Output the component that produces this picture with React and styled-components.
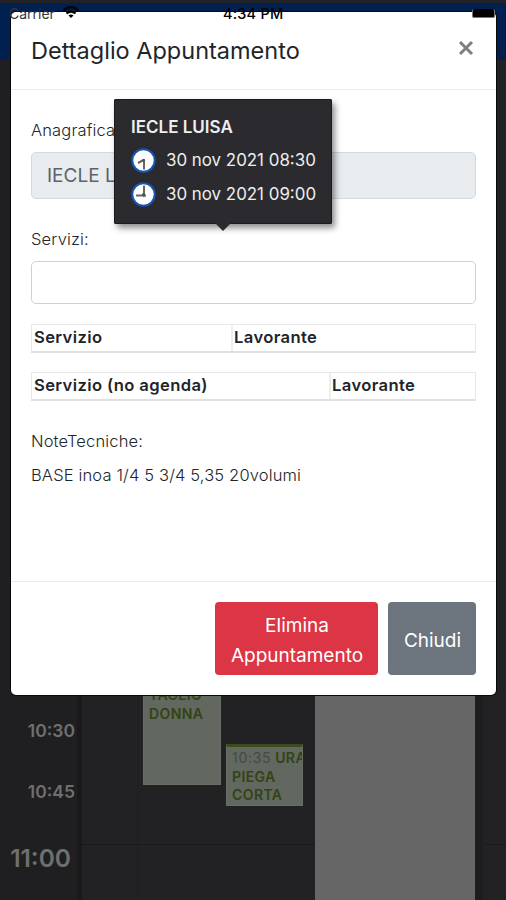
import React from "react";
import styled, { createGlobalStyle } from "styled-components";

const GlobalStyle = createGlobalStyle`
    *{
        box-sizing: border-box;
    }
    body{
        margin: 0;
        background-color: #222224;
        font-family: Inter, "Liberation Sans", sans-serif;
    }
`

const Screen = styled.div`
    position: relative;
    display: flex;
    flex-direction: column;
    width: 506px;
    height: 900px;
    overflow: hidden;
    background-color: #222224;
`

const NavBar = styled.div`
    height: 60px;
    flex-shrink: 0;
    border-top: 3px solid #202228;
    background-color: #02204f;
`

const Agenda = styled.div`
    display: grid;
    grid-template-columns: 77px 5px 56px 87px 90px 160px 8px 23px;
    flex: 1;
`

const Hours = styled.div`
    display: flex;
    flex-direction: column;
    align-items: flex-end;
    padding: 661px 2px 0 0;
    background-color: #1f1f21;
`

const Hour = styled.div`
    height: 61px;
    line-height: 20px;
    font-size: ${({big}) => big ? "24.5px" : "17.5px"};
    font-weight: 600;
    color: #6f6f70;
    margin-top: ${({big}) => big ? "5px" : "0"};
    margin-right: ${({big}) => big ? "4px" : "0"};
`

const Column = styled.div`
    padding-left: ${({left}) => left || 0}px;
    padding-top: ${({top}) => top || 0}px;
    border-right: ${({edge}) => edge ? "1px solid #1e1e20" : "0"};
    background-color: ${({color}) => color || "transparent"};
    background-image: ${({line}) => line ? "linear-gradient(#1a1a1b, #1a1a1b)" : "none"};
    background-size: 100% 1px;
    background-position: 0 784px;
    background-repeat: no-repeat;
`

const Event = styled.div`
    width: ${({width}) => width}px;
    height: ${({height}) => height}px;
    padding: ${({pad}) => pad} 0 0 5px;
    overflow: hidden;
    white-space: nowrap;
    border: 1px solid #686d65;
    border-top: 3px solid #3b4b1b;
    background-color: #62675f;
    color: #304414;
    font-size: 14px;
    font-weight: 600;
    line-height: 18.7px;
    letter-spacing: 0.4px;

    span{
        font-weight: 400;
        color: #454b42;
        letter-spacing: 0.7px;
    }
`

const Modal = styled.div`
    position: absolute;
    left: 11px;
    top: 12px;
    display: flex;
    flex-direction: column;
    width: 485px;
    height: 683px;
    border-radius: 5px;
    background-color: #fff;
    box-shadow: 0 0 0 1px #08090b;
    color: #212529;
`

const Header = styled.div`
    display: flex;
    justify-content: space-between;
    height: 78px;
    padding: 24px 20px 0 20px;
    border-bottom: 1px solid #e9ecef;

    h4{
        margin: 0;
        font-size: 23.5px;
        font-weight: 400;
        line-height: 30px;
        white-space: nowrap;
    }
    svg{
        margin: 4px 2px 0 0;
    }
`

const Body = styled.div`
    display: flex;
    flex-direction: column;
    height: 492px;
    padding: 29px 20px 0 20px;
    border-bottom: 1px solid #e9ecef;
`

const Label = styled.div`
    height: 33px;
    line-height: 22px;
    font-size: 16.5px;
    font-weight: 300;
    letter-spacing: 0.15px;
    white-space: nowrap;
`

const Input = styled.div`
    height: ${({disabled}) => disabled ? "47px" : "43px"};
    padding-left: 15px;
    border: 1px solid ${({disabled}) => disabled ? "#d4d9dd" : "#ced1d4"};
    border-radius: 5px;
    background-color: ${({disabled}) => disabled ? "#e9ecef" : "#fff"};
    color: #5b6269;
    font-size: 19px;
    line-height: 46px;
    margin-bottom: ${({disabled}) => disabled ? "29px" : "20px"};
`

const Table = styled.div`
    display: grid;
    grid-template-columns: ${({first}) => first}px 1fr;
    height: 29px;
    margin-bottom: 19px;
    border: 1px solid #e6e8ea;
    border-bottom: 2px solid #dee2e6;

    b{
        padding-left: 2px;
        font-size: 16.6px;
        font-weight: 600;
        line-height: 24px;
        letter-spacing: 0.38px;
        white-space: nowrap;
    }
    b + b{
        padding-left: 1px;
        border-left: 2px solid #eceef0;
    }
`

const Notes = styled.div`
    padding-top: 10px;

    >div{
        height: 34px;
    }
`

const Footer = styled.div`
    display: flex;
    justify-content: flex-end;
    gap: 10px;
    padding: 20px;
`

const Button = styled.button`
    width: ${({width}) => width}px;
    height: 73px;
    padding: 4px 0 0 1px;
    border: 0;
    border-radius: 4px;
    background-color: ${({color}) => color};
    color: #fff;
    font-family: inherit;
    font-size: 19px;
    line-height: 29.5px;
`

const Tooltip = styled.div`
    position: absolute;
    left: 114px;
    top: 99px;
    width: 218px;
    height: 125px;
    padding: 18px 0 0 17px;
    border-radius: 2px;
    background-color: #2b2a2e;
    box-shadow: 0 0 0 1px #1b1a1d inset, 3px 4px 6px rgba(0, 0, 0, 0.45);
    color: #eee;
    white-space: nowrap;

    b{
        display: block;
        height: 26px;
        font-size: 17px;
        font-weight: 600;
        line-height: 20px;
    }
    &:after{
        content: "";
        position: absolute;
        left: 101px;
        top: 124px;
        border: 8px solid transparent;
        border-top-color: #2b2a2e;
        border-bottom: 0;
    }
`

const When = styled.div`
    display: flex;
    align-items: center;
    gap: 10px;
    height: 34px;
    font-size: 16.9px;
`

const StatusBar = styled.div`
    position: absolute;
    left: 0;
    top: 6px;
    display: grid;
    grid-template-columns: 62px 161px 249px 1fr;
    width: 506px;
    height: 13px;
    overflow: hidden;
    color: #000;
    font-size: 14px;
    line-height: 15px;
    white-space: nowrap;

    span{
        padding-left: 9px;
        color: #33363b;
    }
    b{
        font-size: 14.5px;
        font-weight: 500;
        letter-spacing: 0.2px;
    }
`

const Battery = styled.div`
    width: 23px;
    height: 9px;
    margin-top: 3px;
    border: 1px solid #777;
    border-top: 0;
    border-radius: 2px;
    background-color: #000;
`

const Clock = ({hand}) => (
    <svg width="25" height="25" viewBox="0 0 25 25">
        <circle cx="12.5" cy="12.5" r="11.2" fill="#fff" stroke="#1557b8" strokeWidth="2" />
        <path d={hand} fill="none" stroke="#6b665f" strokeWidth="2" />
        <circle cx="12.5" cy="12.5" r="1.6" fill="#5b564f" />
    </svg>
)

const dates = [
    {text: "30 nov 2021 08:30", hand: "M13 21.5V11.5M13.5 11.5L7 15"},
    {text: "30 nov 2021 09:00", hand: "M13 3.5V15M15 13.5H5"},
]

export default function App(){
    return <>
        <GlobalStyle />
        <Screen>
            <NavBar />
            <Agenda>
                <Hours>
                    <Hour>10:30</Hour>
                    <Hour>10:45</Hour>
                    <Hour big>11:00</Hour>
                </Hours>
                <Column color="#19191a" />
                <Column line edge />
                <Column line left={5} top={560}>
                    <Event width={78} height={165} pad="63px">TAGLIO<br />DONNA</Event>
                </Column>
                <Column line left={1} top={684}>
                    <Event width={77} height={62} pad="2px"><span>10:35</span> URA<br />PIEGA<br />CORTA</Event>
                </Column>
                <Column color="#666" />
                <Column color="#1d1d1f" />
                <Column line />
            </Agenda>

            <Modal>
                <Header>
                    <h4>Dettaglio Appuntamento</h4>
                    <svg width="16" height="16" viewBox="0 0 16 16">
                        <path d="M2 2L14 14M14 2L2 14" stroke="#7f7f7f" strokeWidth="3" />
                    </svg>
                </Header>
                <Body>
                    <Label>Anagrafica:</Label>
                    <Input disabled>IECLE LUISA</Input>
                    <Label>Servizi:</Label>
                    <Input />
                    <Table first={199}>
                        <b>Servizio</b>
                        <b>Lavorante</b>
                    </Table>
                    <Table first={297}>
                        <b>Servizio (no agenda)</b>
                        <b>Lavorante</b>
                    </Table>
                    <Notes>
                        <Label>NoteTecniche:</Label>
                        <Label>BASE inoa 1/4 5 3/4 5,35 20volumi</Label>
                    </Notes>
                </Body>
                <Footer>
                    <Button color="#dc3545" width={163}>Elimina<br />Appuntamento</Button>
                    <Button color="#6c757d" width={88}>Chiudi</Button>
                </Footer>
            </Modal>

            <Tooltip>
                <b>IECLE LUISA</b>
                {dates.map((d, i) => <When key={i}><Clock hand={d.hand} />{d.text}</When>)}
            </Tooltip>

            <StatusBar>
                <span>Carrier</span>
                <svg width="18" height="13" viewBox="0 0 18 13">
                    <path d="M1.5 4.5Q9-2.500 16.500 4.500M4.500 7.500Q9 3.500 13.500 7.500" fill="none" stroke="#000" strokeWidth="2.300" />
                    <path d="M6.500 9.500Q9 7.500 11.500 9.500L9 12Z" />
                </svg>
                <b>4:34 PM</b>
                <Battery />
            </StatusBar>
        </Screen>
    </>
}
